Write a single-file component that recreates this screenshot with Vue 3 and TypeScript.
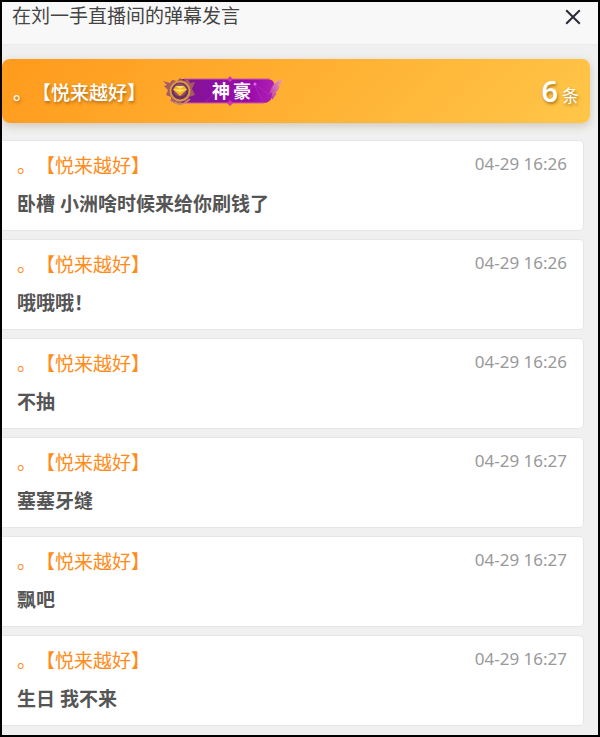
<script setup lang="ts">
interface Message {
  id: number
  time: string
  text: string
}

const user = '。【悦来越好】'

const messages: Message[] = [
  { id: 1, time: '04-29 16:26', text: '卧槽 小洲啥时候来给你刷钱了' },
  { id: 2, time: '04-29 16:26', text: '哦哦哦！' },
  { id: 3, time: '04-29 16:26', text: '不抽' },
  { id: 4, time: '04-29 16:27', text: '塞塞牙缝' },
  { id: 5, time: '04-29 16:27', text: '飘吧' },
  { id: 6, time: '04-29 16:27', text: '生日 我不来' },
]
</script>

<template>
  <main class="dialog">
    <header class="titlebar">
      <h1 class="title">在刘一手直播间的弹幕发言</h1>
      <button class="close" type="button" aria-label="关闭">
        <svg width="16" height="16" viewBox="0 0 16 16" aria-hidden="true">
          <path d="M1.2 1.2 14.8 14.8M14.8 1.2 1.2 14.8" fill="none" stroke="#2b2b38" stroke-width="2" />
        </svg>
      </button>
    </header>

    <section class="banner">
      <span class="banner-name">{{ user }}</span>
      <span class="badge">
        <svg class="badge-art" viewBox="0 0 122 32" aria-hidden="true">
          <defs>
            <linearGradient id="plate" x1="0" x2="1" y1="0" y2="0">
              <stop offset="0" stop-color="#7a1a86" />
              <stop offset="0.3" stop-color="#8a0fa0" />
              <stop offset="0.75" stop-color="#9a0cab" />
              <stop offset="1" stop-color="#b01fb4" />
            </linearGradient>
            <linearGradient id="wing" x1="0" x2="1" y1="1" y2="0">
              <stop offset="0" stop-color="#b12ac0" />
              <stop offset="1" stop-color="#f2a8a0" />
            </linearGradient>
          </defs>
          <path d="M18 4H106Q113 5 112 11L110 22Q108 28 101 28H18Z" fill="url(#plate)" />
          <path d="M22 4H108M22 28H102" fill="none" stroke="#d05a9a" stroke-width="1.200" />
          <path d="M42 28 54 17 62 5M78 28 92 9 110 21M92 9 101 27" fill="none" stroke="#c13cc6" stroke-width="1" opacity="0.400" />
          <path d="M121 4Q113 6 110 12L107 19L112 17Q109 22 110 25Q113 21 115 18L113 18Q117 15 118 11L116 11Q120 8 121 4Z" fill="url(#wing)" />
          <path d="M68 1 71 4.500 68 7 65 4.500ZM68 25 71 28 68 31 65 28Z" fill="#c93aa8" />
          <circle cx="93" cy="9" r="1.500" fill="#e06adb" />
          <path d="M1 6 8 8 10 5 15 6 18 3 22 6 26 4 28 8 33 7 30 14 33 20 27 22 25 27 21 26 18 30 14 27 9 27 9 22 4 20 6 15 2 11 5 10Z" fill="#a45a60" />
          <circle cx="18" cy="16" r="9.500" fill="#6b3060" stroke="#d89848" stroke-width="2" />
          <circle cx="18" cy="15" r="6.500" fill="#9a5060" />
          <path d="M14 11H22L25 14.500 18 21 11 14.500Z" fill="#f6b420" />
          <path d="M14 11 18 14 22 11ZM11 14.500H25L18 17Z" fill="#ffe270" />
          <path d="M8 25Q13 29 18 29T28 24" fill="none" stroke="#c68a70" stroke-width="1.500" />
        </svg>
        <span class="badge-text">神豪</span>
      </span>
      <span class="count"><strong class="count-number">6</strong><span class="count-unit">条</span></span>
    </section>

    <ul class="list">
      <li v-for="message in messages" :key="message.id" class="card">
        <div class="meta">
          <span class="name">{{ user }}</span>
          <time class="time">{{ message.time }}</time>
        </div>
        <p class="text">{{ message.text }}</p>
      </li>
    </ul>
  </main>
</template>

<style>
body {
  margin: 0;
  background: #f0f0f0;
}
</style>

<style scoped>
.dialog {
  box-sizing: border-box;
  min-height: 100vh;
  border: 2px solid #000;
  background: #f0f0f0;
  font-family: "Noto Sans", "Noto Sans CJK SC", sans-serif;
  font-size: 19px;
  line-height: 28px;
  text-spacing-trim: space-all;
}

.titlebar {
  display: flex;
  align-items: flex-start;
  justify-content: space-between;
  height: 42px;
  padding: 0 17px 0 10px;
  border-bottom: 1px solid #ebebeb;
  background: #f8f8f8;
}

.title {
  margin: 0;
  color: #444;
  font-size: 19px;
  font-weight: 400;
}

.close {
  display: flex;
  padding: 7px 0;
  border: 0;
  background: none;
  cursor: pointer;
}

.banner {
  display: flex;
  align-items: center;
  height: 64px;
  box-sizing: border-box;
  margin: 14px 8px 0 0;
  padding: 0 11px;
  border-radius: 8px;
  background: linear-gradient(135deg, #ff9a1c, #ffc648);
  box-shadow: 0 3px 8px rgba(110, 80, 30, 0.25);
  color: #fff;
  text-shadow: 1px 2px 3px rgba(100, 60, 0, 0.5);
}

.banner-name {
  padding-top: 4px;
  font-weight: 500;
}

.badge {
  position: relative;
  display: flex;
  width: 122px;
  height: 32px;
  margin-left: 16px;
}

.badge-art {
  width: 100%;
  height: 100%;
}

.badge-text {
  position: absolute;
  inset: 0 0 0 50px;
  font-size: 18px;
  font-weight: 700;
  line-height: 32px;
  letter-spacing: 3px;
  text-shadow: none;
}

.count {
  display: flex;
  align-items: baseline;
  gap: 4px;
  margin-left: auto;
}

.count-number {
  font-size: 29px;
  font-weight: 600;
  line-height: 40px;
}

.count-unit {
  font-size: 17px;
}

.list {
  display: flex;
  flex-direction: column;
  gap: 8px;
  margin: 0;
  padding: 17px 14px 8px 0;
  list-style: none;
}

.card {
  padding: 11px 16px 12px 15px;
  border: 1px solid #e5e5e5;
  border-left: 0;
  border-radius: 0 5px 5px 0;
  background: #fff;
}

.meta {
  display: flex;
  justify-content: space-between;
}

.name {
  color: #ff8c1a;
}

.time {
  color: #999;
  font-size: 17px;
  line-height: 24px;
}

.text {
  margin: 10px 0 0;
  color: #555;
  font-weight: 700;
}
</style>
